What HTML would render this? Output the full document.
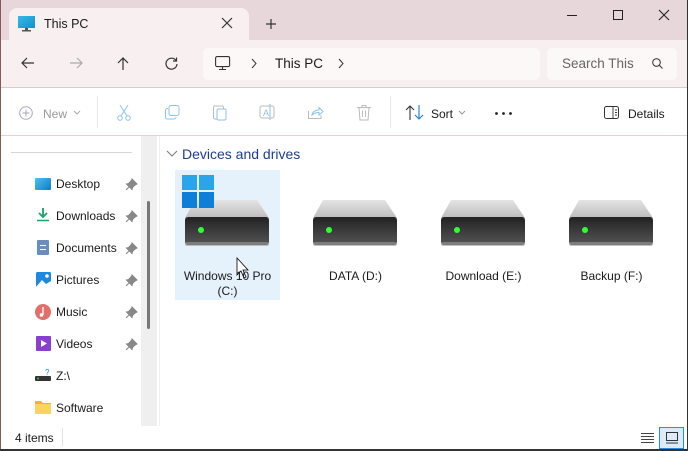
<!DOCTYPE html>
<html><head><meta charset="utf-8"><style>
*{margin:0;padding:0;box-sizing:border-box}
body{width:688px;height:451px;overflow:hidden;font-family:"Liberation Sans",sans-serif;background:#fff;position:relative;color:#1a1a1a}
.a{position:absolute}
.t{font-size:12px;white-space:nowrap}
svg{position:absolute;overflow:visible}
</style></head><body>
<!-- title bar -->
<div class="a" style="left:0;top:0;width:688px;height:40px;background:#e8d7da"></div>
<div class="a" style="left:9px;top:8px;width:240px;height:34px;background:#f7eff0;border-radius:8px 8px 0 0"></div>
<svg style="left:18px;top:16px" width="18" height="16"><rect x="0" y="0" width="17" height="12" fill="#1aa3d9"/><rect x="0" y="0" width="17" height="12" fill="url(#g)" opacity=".4"/><rect x="7" y="12" width="3" height="2" fill="#555"/><rect x="4" y="14" width="9" height="1.5" fill="#555"/><defs><linearGradient id="g" x1="0" y1="0" x2="1" y2="1"><stop offset="0" stop-color="#5fe0f0"/><stop offset="1" stop-color="#0a6fc0"/></linearGradient></defs></svg>
<div class="a t" style="left:44px;top:17px;font-size:12.5px">This PC</div>
<svg style="left:222px;top:18px" width="10" height="10"><path d="M0 0L10 10M10 0L0 10" stroke="#333" stroke-width="1.2"/></svg>
<svg style="left:266px;top:19px" width="10" height="10"><path d="M5 0V10M0 5H10" stroke="#333" stroke-width="1.2"/></svg>
<svg style="left:567px;top:15px" width="10" height="1"><path d="M0 .5H10" stroke="#222"/></svg>
<svg style="left:613px;top:10px" width="10" height="10"><rect x=".5" y=".5" width="9" height="9" fill="none" stroke="#222"/></svg>
<svg style="left:659px;top:10px" width="10" height="10"><path d="M0 0L10 10M10 0L0 10" stroke="#222" stroke-width="1.1"/></svg>
<!-- address row -->
<div class="a" style="left:0;top:40px;width:688px;height:48px;background:#f7eff0;border-bottom:1px solid #dcc8c8"></div>
<svg style="left:21px;top:57px" width="13" height="12"><path d="M13 6H1M6 1L1 6L6 11" stroke="#333" stroke-width="1.2" fill="none"/></svg>
<svg style="left:70px;top:57px" width="13" height="12"><path d="M0 6H12M7 1L12 6L7 11" stroke="#aaa" stroke-width="1.2" fill="none"/></svg>
<svg style="left:117px;top:57px" width="12" height="13"><path d="M6 13V1M1 6L6 1L11 6" stroke="#333" stroke-width="1.2" fill="none"/></svg>
<svg style="left:165px;top:57px" width="13" height="13"><path d="M11 3.5A5.5 5.5 0 1 0 12 7" stroke="#333" stroke-width="1.2" fill="none"/><path d="M11.5 0.5V4H8" stroke="#333" stroke-width="1.2" fill="none"/></svg>
<div class="a" style="left:203px;top:48px;width:337px;height:32px;background:#fcf8f8;border-radius:5px"></div>
<svg style="left:215px;top:56px" width="16" height="15"><rect x=".6" y=".6" width="14" height="10" rx="1.5" fill="none" stroke="#333" stroke-width="1.1"/><path d="M7.5 11V13M4 13.5H11" stroke="#333" stroke-width="1.1"/></svg>
<svg style="left:251px;top:59px" width="6" height="9"><path d="M1 0L5 4.5L1 9" stroke="#333" fill="none"/></svg>
<div class="a t" style="left:275px;top:56px;font-size:13.5px">This PC</div>
<svg style="left:338px;top:59px" width="6" height="9"><path d="M1 0L5 4.5L1 9" stroke="#333" fill="none"/></svg>
<div class="a" style="left:547px;top:48px;width:130px;height:32px;background:#fcf8f8;border-radius:5px"></div>
<div class="a t" style="left:562px;top:56px;font-size:13.5px;color:#666">Search This</div>
<svg style="left:652px;top:58px" width="11" height="11"><circle cx="4.5" cy="4.5" r="3.8" stroke="#444" fill="none" stroke-width="1.1"/><path d="M7.3 7.3L10.5 10.5" stroke="#444" stroke-width="1.2"/></svg>
<!-- toolbar -->
<div class="a" style="left:0;top:135px;width:688px;height:1px;background:#e3d4d4"></div>
<svg style="left:19px;top:106px" width="14" height="14"><circle cx="7" cy="7" r="6.3" stroke="#aab" fill="none"/><path d="M7 3.5V10.5M3.5 7H10.5" stroke="#aab"/></svg>
<div class="a t" style="left:43px;top:107px;color:#999">New</div>
<svg style="left:74px;top:111px" width="6" height="4"><path d="M0 0L3 3L6 0" stroke="#aaa" fill="none"/></svg>
<div class="a" style="left:97px;top:96px;width:1px;height:32px;background:#e6e6e6"></div>
<svg style="left:117px;top:105px" width="14" height="16"><path d="M3 0L10 11M11 0L4 11" stroke="#8ec3ee" fill="none"/><circle cx="3" cy="13" r="2.3" stroke="#8ec3ee" fill="none"/><circle cx="11" cy="13" r="2.3" stroke="#8ec3ee" fill="none"/></svg>
<svg style="left:165px;top:105px" width="15" height="15"><rect x="4" y="0.5" width="10" height="10" rx="2" stroke="#8ec3ee" fill="none"/><path d="M3 3.5H2.5A2 2 0 0 0 .5 5.5V12A2 2 0 0 0 2.5 14H9A2 2 0 0 0 11 12" stroke="#8ec3ee" fill="none"/></svg>
<svg style="left:213px;top:104px" width="15" height="17"><rect x=".5" y="2" width="10" height="13" rx="1.5" stroke="#bbb" fill="none"/><rect x="4" y="5" width="9" height="11" rx="1.5" stroke="#8ec3ee" fill="#fff"/></svg>
<svg style="left:259px;top:104px" width="17" height="17"><rect x="1" y="2" width="14" height="12" rx="2" stroke="#bbb" fill="none"/><text x="4" y="12" font-size="9" fill="#8ec3ee" font-family="Liberation Sans">A</text><path d="M11 0V16" stroke="#8ec3ee"/></svg>
<svg style="left:308px;top:106px" width="16" height="14"><path d="M.5 5V12.5H13V9" stroke="#bbb" fill="none"/><path d="M4 9Q5 4 11 4V1.5L15 5.5L11 9V6.5Q7 6.5 4 9Z" stroke="#8ec3ee" fill="none"/></svg>
<svg style="left:357px;top:105px" width="14" height="16"><path d="M0 2.5H14M5 2.5V.5H9V2.5M2 2.5L3 15H11L12 2.5M5.5 5.5V12M8.5 5.5V12" stroke="#bbb" fill="none"/></svg>
<div class="a" style="left:390px;top:96px;width:1px;height:32px;background:#e6e6e6"></div>
<svg style="left:406px;top:105px" width="18" height="15"><path d="M4 15V1M0 5L4 1L8 5" stroke="#333" fill="none" stroke-width="1.1"/><path d="M13 0V14M9 10L13 14L17 10" stroke="#1a7ed8" fill="none" stroke-width="1.1"/></svg>
<div class="a t" style="left:431px;top:107px">Sort</div>
<svg style="left:459px;top:111px" width="6" height="4"><path d="M0 0L3 3L6 0" stroke="#999" fill="none"/></svg>
<svg style="left:495px;top:112px" width="18" height="3"><circle cx="1.5" cy="1.5" r="1.4" fill="#222"/><circle cx="8.5" cy="1.5" r="1.4" fill="#222"/><circle cx="15.5" cy="1.5" r="1.4" fill="#222"/></svg>
<svg style="left:604px;top:106px" width="16" height="13"><rect x=".5" y=".5" width="14" height="12" rx="2" stroke="#333" fill="none"/><path d="M9 .5V12.5M11 4H13M11 6.5H13M11 9H13" stroke="#333" stroke-width=".9"/></svg>
<div class="a t" style="left:628px;top:107px">Details</div>
<!-- sidebar -->
<div class="a" style="left:11px;top:152px;width:121px;height:1px;background:#d6d6d6"></div>
<div class="a" style="left:141px;top:136px;width:16px;height:290px;background:#efefef"></div>
<div class="a" style="left:147px;top:201px;width:3px;height:128px;background:#777;border-radius:2px"></div>
<div class="a" style="left:159px;top:136px;width:1px;height:290px;background:#f0f0f0"></div>

<div class="a" style="left:35px;top:178px;width:16px;height:12px;background:linear-gradient(135deg,#4dc3f0,#0d7cc4);border-radius:1px"></div>
<div class="a t" style="left:56px;top:177px">Desktop</div>
<svg style="left:37px;top:208px" width="12" height="14"><path d="M6 0V9M2 5L6 9L10 5" stroke="#1aa36a" stroke-width="1.8" fill="none"/><path d="M0 12.5H12" stroke="#1aa36a" stroke-width="1.5"/></svg>
<div class="a t" style="left:56px;top:209px">Downloads</div>
<div class="a" style="left:37px;top:240px;width:12px;height:15px;background:#6a8cc0;border-radius:1px"></div>
<div class="a" style="left:40px;top:245px;width:6px;height:5px;border-top:1px solid #fff;border-bottom:1px solid #fff"></div>
<div class="a t" style="left:56px;top:241px">Documents</div>
<svg style="left:36px;top:272px" width="15" height="15"><rect width="15" height="15" rx="1.5" fill="#1e88e0"/><path d="M0 15L6 8L10 12L15 9V15Z" fill="#fff"/><circle cx="11" cy="4" r="1.8" fill="#fff"/></svg>
<div class="a t" style="left:56px;top:273px">Pictures</div>
<svg style="left:35px;top:304px" width="16" height="16"><circle cx="8" cy="8" r="8" fill="#e0706a"/><path d="M8 3V11" stroke="#fff" stroke-width="1.3"/><circle cx="6.5" cy="11" r="1.8" fill="#fff"/></svg>
<div class="a t" style="left:56px;top:305px">Music</div>
<svg style="left:36px;top:336px" width="15" height="15"><rect width="15" height="15" rx="1" fill="#8a3fd0"/><path d="M5 4V11L11 7.5Z" fill="#fff"/></svg>
<div class="a t" style="left:56px;top:337px">Videos</div>
<svg style="left:35px;top:368px" width="17" height="14"><text x="10" y="7" font-size="8" fill="#1a8ae0" font-family="Liberation Sans">?</text><rect x="0" y="8" width="16" height="5" rx="1" fill="#333"/><circle cx="3" cy="10.5" r="1" fill="#3c3"/></svg>
<div class="a t" style="left:56px;top:369px">Z:\</div>
<svg style="left:35px;top:400px" width="17" height="14"><path d="M0 1H6L8 3H16V14H0Z" fill="#e9b830"/><rect x="0" y="4" width="16" height="10" fill="#fcd35f"/></svg>
<div class="a t" style="left:56px;top:401px">Software</div>
<!-- pins -->
<svg style="left:126px;top:179px" width="11" height="11"><path d="M6 0L11 5L9 6L6.5 8.5L6 10.5L0.5 5L2.5 4.5L5 2Z M3 8L0 11" fill="#888" stroke="#888"/></svg>
<svg style="left:126px;top:211px" width="11" height="11"><path d="M6 0L11 5L9 6L6.5 8.5L6 10.5L0.5 5L2.5 4.5L5 2Z M3 8L0 11" fill="#888" stroke="#888"/></svg>
<svg style="left:126px;top:243px" width="11" height="11"><path d="M6 0L11 5L9 6L6.5 8.5L6 10.5L0.5 5L2.5 4.5L5 2Z M3 8L0 11" fill="#888" stroke="#888"/></svg>
<svg style="left:126px;top:275px" width="11" height="11"><path d="M6 0L11 5L9 6L6.5 8.5L6 10.5L0.5 5L2.5 4.5L5 2Z M3 8L0 11" fill="#888" stroke="#888"/></svg>
<svg style="left:126px;top:307px" width="11" height="11"><path d="M6 0L11 5L9 6L6.5 8.5L6 10.5L0.5 5L2.5 4.5L5 2Z M3 8L0 11" fill="#888" stroke="#888"/></svg>
<svg style="left:126px;top:339px" width="11" height="11"><path d="M6 0L11 5L9 6L6.5 8.5L6 10.5L0.5 5L2.5 4.5L5 2Z M3 8L0 11" fill="#888" stroke="#888"/></svg>
<!-- content -->
<svg style="left:167px;top:151px" width="10" height="6"><path d="M0 0L5 5L10 0" stroke="#777" fill="none"/></svg>
<div class="a t" style="left:182px;top:146px;font-size:14px;color:#1f3d8a">Devices and drives</div>
<div class="a" style="left:175px;top:170px;width:105px;height:130px;background:#e5f1fb"></div>
<svg style="left:0;top:0" width="688" height="451">
<defs><linearGradient id="b" x1="0" y1="0" x2="0" y2="1"><stop offset="0" stop-color="#222"/><stop offset="1" stop-color="#555"/></linearGradient>
<linearGradient id="tp" x1="0" y1="0" x2="0" y2="1"><stop offset="0" stop-color="#e4e4e4"/><stop offset="1" stop-color="#bdbdbd"/></linearGradient></defs>
<g id="d"><path d="M195 200H257L269 218H185Z" fill="url(#tp)"/><rect x="185" y="217" width="84" height="28" rx="3" fill="url(#b)"/><rect x="185" y="242" width="84" height="4" rx="2" fill="#999" opacity=".6"/><circle cx="201" cy="230" r="3" fill="#3f3"/></g>
<use href="#d" x="128"/><use href="#d" x="256"/><use href="#d" x="384"/>
<rect x="182" y="175" width="15" height="15" fill="#2aa4ea"/><rect x="199" y="175" width="15" height="15" fill="#2aa4ea"/><rect x="182" y="192" width="15" height="16" fill="#0e7fd9"/><rect x="199" y="192" width="15" height="16" fill="#0e7fd9"/>
<path d="M237 258V275L241 271L244 278L246 277L243 270H248Z" fill="#fff" stroke="#000" stroke-width=".8"/>
</svg>
<div class="a t" style="left:175px;top:269px;width:105px;text-align:center;line-height:15px">Windows 10 Pro<br>(C:)</div>
<div class="a t" style="left:303px;top:269px;width:105px;text-align:center">DATA (D:)</div>
<div class="a t" style="left:431px;top:269px;width:105px;text-align:center">Download (E:)</div>
<div class="a t" style="left:559px;top:269px;width:105px;text-align:center">Backup (F:)</div>
<!-- status -->
<div class="a t" style="left:15px;top:431px">4 items</div>
<div class="a" style="left:62px;top:428px;width:1px;height:18px;background:#e3e3e3"></div>
<svg style="left:641px;top:433px" width="13" height="10"><path d="M0 .5H13M0 3.5H13M0 6.5H13M0 9.5H13" stroke="#444"/></svg>
<div class="a" style="left:659px;top:427px;width:25px;height:22px;background:#dcebfa;border:1px solid #2b8ae6"></div>
<svg style="left:666px;top:432px" width="12" height="12"><rect x=".5" y=".5" width="11" height="8" fill="none" stroke="#333"/><path d="M0 11H12" stroke="#333"/></svg>
<!-- window borders -->
<div class="a" style="left:0;top:0;width:1px;height:451px;background:#8a5a50"></div>
<div class="a" style="left:687px;top:0;width:1px;height:451px;background:#333"></div>
<div class="a" style="left:0;top:449px;width:688px;height:2px;background:#333"></div>
</body></html>
